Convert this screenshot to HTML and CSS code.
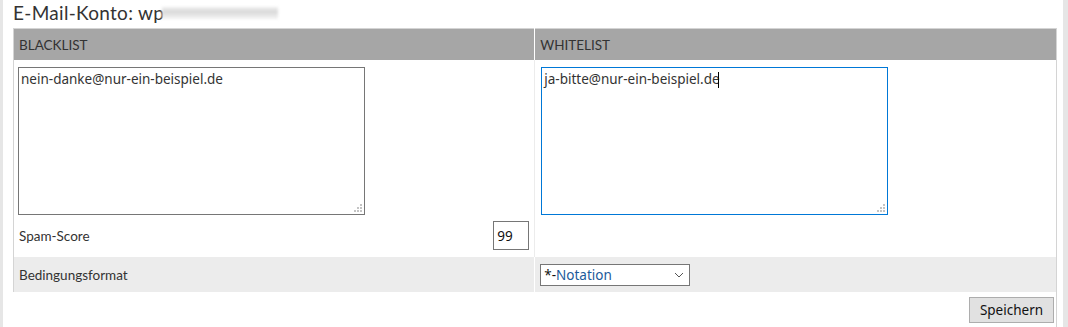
FILE: index.html
```html
<!DOCTYPE html>
<html lang="de">
<head>
    <meta charset="UTF-8" />
    <title>E-Mail-Konto Filter</title>
    <link rel="stylesheet" href="styles.css">
</head>
<body>
    <div class="page">
        <div class="strip strip-left"></div>

        <div class="main">
            <h2 class="title">E-Mail-Konto: wp<span class="blurred"></span></h2>

            <div class="form-box">
                <table class="lists">
                    <tr class="head-row">
                        <th>BLACKLIST</th>
                        <th>WHITELIST</th>
                    </tr>
                    <tr class="list-row">
                        <td>
                            <div class="area-wrap">
                                <textarea class="list-area">nein-danke@nur-ein-beispiel.de</textarea>
                                <svg class="grip" width="8" height="8" viewBox="0 0 8 8">
                                    <rect x="6" y="0" width="2" height="2" />
                                    <rect x="3" y="3" width="2" height="2" />
                                    <rect x="6" y="3" width="2" height="2" />
                                    <rect x="0" y="6" width="2" height="2" />
                                    <rect x="3" y="6" width="2" height="2" />
                                    <rect x="6" y="6" width="2" height="2" />
                                </svg>
                            </div>
                            <div class="score-line">
                                <span>Spam-Score</span>
                                <input class="score-input" type="text" value="99">
                            </div>
                        </td>
                        <td>
                            <div class="area-wrap">
                                <textarea class="list-area focused">ja-bitte@nur-ein-beispiel.de</textarea>
                                <span class="caret"></span>
                                <svg class="grip" width="8" height="8" viewBox="0 0 8 8">
                                    <rect x="6" y="0" width="2" height="2" />
                                    <rect x="3" y="3" width="2" height="2" />
                                    <rect x="6" y="3" width="2" height="2" />
                                    <rect x="0" y="6" width="2" height="2" />
                                    <rect x="3" y="6" width="2" height="2" />
                                    <rect x="6" y="6" width="2" height="2" />
                                </svg>
                            </div>
                        </td>
                    </tr>
                    <tr class="format-row">
                        <td>Bedingungsformat</td>
                        <td>
                            <div class="select-box">
                                <span class="select-text"><span class="star">*-</span>Notation</span>
                                <svg width="10" height="6" viewBox="0 0 10 6">
                                    <path d="M1 1 L5 5 L9 1" fill="none" stroke="#555" stroke-width="1" />
                                </svg>
                            </div>
                        </td>
                    </tr>
                </table>

                <div class="actions">
                    <button class="save-btn">Speichern</button>
                </div>
            </div>
        </div>

        <div class="strip strip-right"></div>
    </div>
</body>
</html>
```

FILE: styles.css
```css
html,
body {
    margin: 0;
    padding: 0;
    background: #fff;
    font-family: Lato, "Noto Sans", sans-serif;
    color: #333;
    overflow: hidden;
}

.page {
    display: flex;
    height: 327px;
}

.strip {
    background: #e6e6e6;
}

.strip-left {
    width: 3px;
}

.strip-right {
    width: 5px;
}

.main {
    flex: 1;
    padding: 0 6px 0 10px;
}

.title {
    margin: 0;
    height: 28px;
    padding-bottom: 3px;
    box-sizing: border-box;
    font-size: 19px;
    font-weight: 400;
    letter-spacing: 0.3px;
    line-height: 25px;
    color: #333;
    display: flex;
    align-items: center;
}

.blurred {
    display: inline-block;
    width: 116px;
    height: 12px;
    margin-left: -2px;
    background: linear-gradient(180deg, #efefef 0%, #d6d6d6 45%, #e4e4e4 60%, #f2f2f2 100%);
    filter: blur(1.5px);
}

/* Formularrahmen */
.form-box {
    border-right: 1px solid #d4d4d4;
    height: 299px;
}

.lists {
    width: 100%;
    border-collapse: collapse;
    border-top: 1px solid #d4d4d4;
    border-left: 1px solid #d4d4d4;
}

.lists td,
.lists th {
    padding: 0;
    vertical-align: top;
    width: 50%;
}

.head-row th {
    background: #a6a6a6;
    height: 31px;
    text-align: left;
    font-size: 13.5px;
    font-weight: 400;
    color: #333;
    padding-left: 5px;
    vertical-align: middle;
}

.head-row th + th {
    border-left: 1px solid #fff;
}

.list-row td {
    height: 190px;
    padding: 7px 5px 0 4px;
}

.list-row td + td {
    border-left: 1px solid #ececec;
    padding-left: 6px;
}

.area-wrap {
    position: relative;
    width: 347px;
    height: 148px;
}

.list-area {
    box-sizing: border-box;
    width: 100%;
    height: 100%;
    margin: 0;
    padding: 2px 2px;
    border: 1px solid #767676;
    resize: none;
    outline: none;
    font-family: "Noto Sans", sans-serif;
    font-size: 13.5px;
    color: #333;
}

.list-area.focused {
    border-color: #0078d7;
}

.caret {
    position: absolute;
    left: 177px;
    top: 5px;
    width: 1px;
    height: 16px;
    background: #000;
}

.grip {
    position: absolute;
    right: 3px;
    bottom: 3px;
    fill: #c4c4c4;
}

.score-line {
    display: flex;
    justify-content: space-between;
    align-items: center;
    margin-top: 6px;
    padding-left: 1px;
    font-size: 13.5px;
}

.score-input {
    box-sizing: border-box;
    width: 36px;
    height: 29px;
    margin: 0;
    padding: 0 3px;
    border: 1px solid #767676;
    font-family: "Noto Sans", sans-serif;
    font-size: 13.5px;
    color: #111;
}

.format-row td {
    background: #ececec;
    height: 35px;
    font-size: 13.5px;
    vertical-align: middle;
    padding-left: 5px;
}

.format-row td + td {
    border-left: 1px solid #fff;
}

.select-box {
    box-sizing: border-box;
    width: 150px;
    height: 22px;
    border: 1px solid #767676;
    background: #fff;
    display: flex;
    align-items: center;
    justify-content: space-between;
    padding: 0 5px 0 3px;
}

.select-text {
    font-family: "Noto Sans", sans-serif;
    font-size: 13.5px;
    color: #1c5a9a;
}

.star {
    color: #111;
}

.actions {
    display: flex;
    justify-content: flex-end;
    padding: 5px 2px 0 0;
}

.save-btn {
    width: 85px;
    height: 26px;
    background: #e1e1e1;
    border: 1px solid #adadad;
    font-family: "Noto Sans", sans-serif;
    font-size: 13.5px;
    color: #111;
    padding: 0;
}
```
